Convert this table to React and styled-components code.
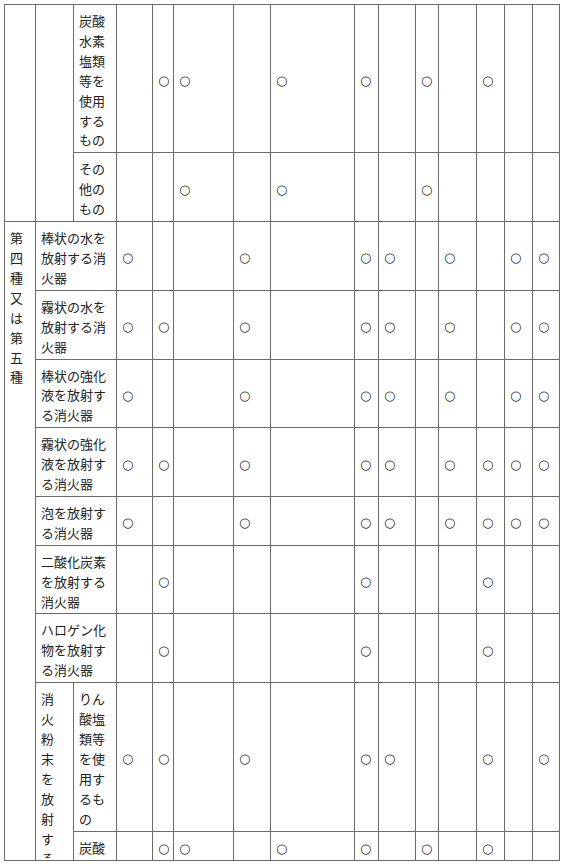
import React from 'react';
import styled, { createGlobalStyle } from 'styled-components';

const GlobalStyle = createGlobalStyle`
  body {
    margin: 0;
    background: #fff;
  }
`;

const Page = styled.div`
  padding: 4px 0 0 4px;
  font-family: "Noto Sans CJK JP", "Liberation Sans", sans-serif;
  font-size: 13px;
  line-height: 19.9px;
  color: #222;
`;

const Sheet = styled.table`
  border-collapse: collapse;
  table-layout: fixed;
  width: 556px;
`;

const Cell = styled.td`
  border: 1px solid #6b6b6b;
  padding: ${p => (p.$clip ? '6px 5px 0' : '6px 5px 2px')};
  vertical-align: ${p => (p.$top ? 'top' : 'middle')};
  white-space: nowrap;
  overflow: hidden;
`;

const Clip = styled.div`
  height: ${p => p.$h}px;
  overflow: hidden;
`;

const Mark = styled.span`
  font-family: "DejaVu Sans", sans-serif;
  font-size: 13px;
  color: #2a2a2a;
`;

const COLS = [31, 38, 43, 36, 21, 60, 37, 84, 24, 37, 23, 38, 28, 28, 27];

const Lines = ({ text }) =>
  text.split('/').map((line, i) => (
    <React.Fragment key={i}>
      {i > 0 && <br />}
      {line}
    </React.Fragment>
  ));

const MarkCells = ({ on }) =>
  Array.from({ length: 12 }, (_, i) => (
    <Cell key={i}>{on.includes(i + 1) && <Mark>○</Mark>}</Cell>
  ));

const WIDE_ROWS = [
  { label: '棒状の水を/放射する消/火器', on: [1, 4, 6, 7, 9, 11, 12] },
  { label: '霧状の水を/放射する消/火器', on: [1, 2, 4, 6, 7, 9, 11, 12] },
  { label: '棒状の強化/液を放射す/る消火器', on: [1, 4, 6, 7, 9, 11, 12] },
  { label: '霧状の強化/液を放射す/る消火器', on: [1, 2, 4, 6, 7, 9, 10, 11, 12] },
  { label: '泡を放射す/る消火器', on: [1, 4, 6, 7, 9, 10, 11, 12] },
  { label: '二酸化炭素/を放射する/消火器', on: [2, 6, 10] },
  { label: 'ハロゲン化/物を放射す/る消火器', on: [2, 6, 10] },
];

export default function App() {
  return (
    <>
      <GlobalStyle />
      <Page>
        <Sheet>
          <colgroup>
            {COLS.map((w, i) => (
              <col key={i} style={{ width: w }} />
            ))}
          </colgroup>
          <tbody>
            <tr>
              <Cell rowSpan={2} />
              <Cell rowSpan={2} />
              <Cell>
                <Lines text="炭酸/水素/塩類/等を/使用/する/もの" />
              </Cell>
              <MarkCells on={[2, 3, 5, 6, 8, 10]} />
            </tr>
            <tr>
              <Cell>
                <Lines text="その/他の/もの" />
              </Cell>
              <MarkCells on={[3, 5, 8]} />
            </tr>
            {WIDE_ROWS.map((row, i) => (
              <tr key={row.label}>
                {i === 0 && (
                  <Cell rowSpan={10} $top>
                    <Lines text="第/四/種/又/は/第/五/種" />
                  </Cell>
                )}
                <Cell colSpan={2}>
                  <Lines text={row.label} />
                </Cell>
                <MarkCells on={row.on} />
              </tr>
            ))}
            <tr>
              <Cell rowSpan={2} $top $clip>
                <Clip $h={169}>
                  <Lines text="消/火/粉/末/を/放/射/す/る" />
                </Clip>
              </Cell>
              <Cell>
                <Lines text="りん/酸塩/類等/を使/用す/るも/の" />
              </Cell>
              <MarkCells on={[1, 2, 4, 6, 7, 10, 12]} />
            </tr>
            <tr>
              <Cell>炭酸</Cell>
              <MarkCells on={[2, 3, 5, 6, 8, 10]} />
            </tr>
          </tbody>
        </Sheet>
      </Page>
    </>
  );
}
